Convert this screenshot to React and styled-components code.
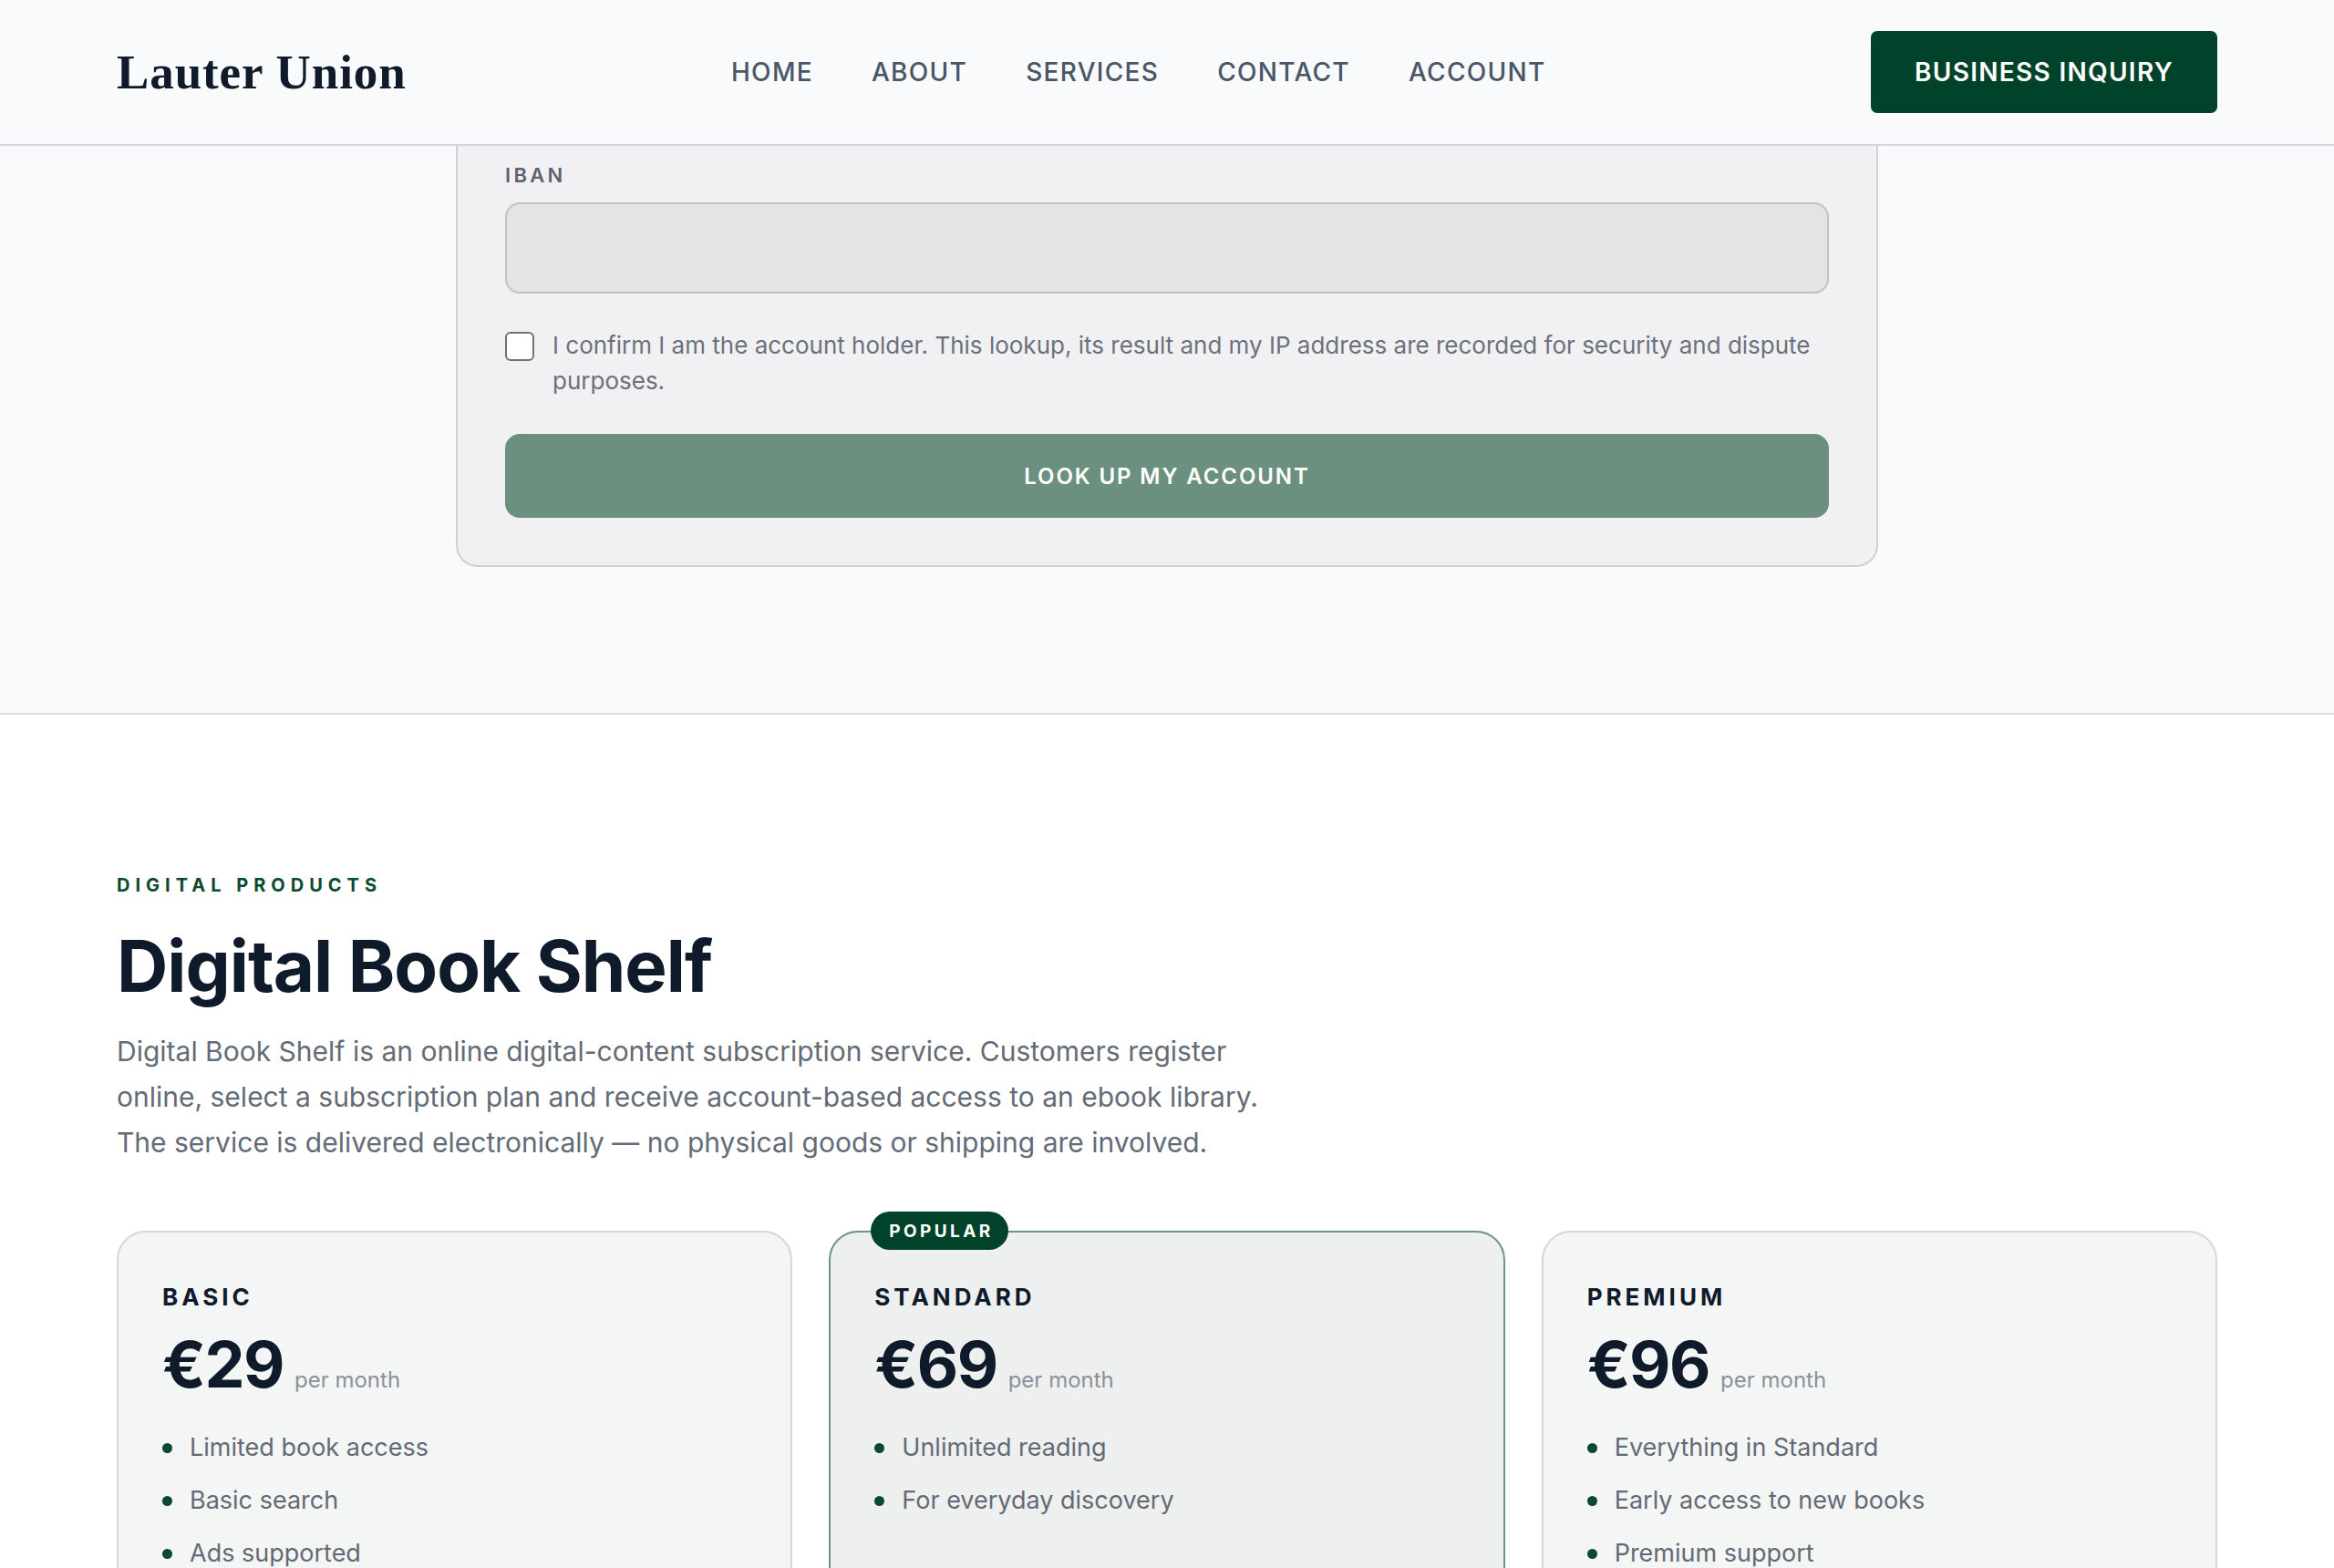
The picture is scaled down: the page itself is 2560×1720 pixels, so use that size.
import React from 'react'
import styled, { createGlobalStyle } from 'styled-components'

const GlobalStyle = createGlobalStyle`
  * { box-sizing: border-box; }
  body {
    margin: 0;
    background: #ffffff;
    font-family: Inter, "Noto Sans", sans-serif;
    color: #0f1a2a;
  }
`

const Header = styled.header`
  height: 160px;
  background: #f8fafc;
  border-bottom: 2px solid #d3d6dc;
`

const HeaderInner = styled.div`
  max-width: 2304px;
  height: 100%;
  margin: 0 auto;
  display: flex;
  align-items: center;
  justify-content: space-between;
`

const Logo = styled.a`
  font-family: "Liberation Serif", "Times New Roman", serif;
  font-weight: 700;
  font-size: 53px;
  letter-spacing: 0.9px;
  color: #0f1a2a;
  text-decoration: none;
`

const Nav = styled.nav`
  display: flex;
  gap: 64px;
`

const NavLink = styled.a`
  font-size: 28px;
  font-weight: 500;
  letter-spacing: 1.3px;
  color: #4a5567;
  text-decoration: none;
`

const InquiryButton = styled.button`
  height: 90px;
  padding: 0 48px;
  background: #01422a;
  color: #ffffff;
  border: none;
  border-radius: 7px;
  font-family: inherit;
  font-size: 28px;
  font-weight: 600;
  letter-spacing: 1.3px;
`

const LookupSection = styled.section`
  background: #f9fafb;
  padding-bottom: 160px;
  border-bottom: 2px solid #d9dbe0;
`

const FormCard = styled.div`
  width: 1560px;
  margin: 0 auto;
  padding: 16px 52px 52px;
  background: #f1f1f3;
  border: 2px solid #cfd0d5;
  border-top: none;
  border-radius: 0 0 24px 24px;
`

const Label = styled.label`
  display: block;
  margin-bottom: 14px;
  font-size: 22px;
  line-height: 32px;
  font-weight: 600;
  letter-spacing: 3.3px;
  color: #5d6470;
`

const TextInput = styled.input`
  display: block;
  width: 100%;
  height: 100px;
  padding: 0 28px;
  background: #e4e4e6;
  border: 2px solid #c0c1c6;
  border-radius: 16px;
  font-family: inherit;
  font-size: 28px;
  outline: none;
`

const ConfirmRow = styled.div`
  display: flex;
  align-items: flex-start;
  gap: 20px;
  margin-top: 37px;
`

const Checkbox = styled.input`
  appearance: none;
  flex-shrink: 0;
  width: 32px;
  height: 32px;
  margin: 5px 0 0;
  background: #ffffff;
  border: 2px solid #6e7178;
  border-radius: 6px;
`

const ConfirmText = styled.span`
  font-size: 26px;
  line-height: 39px;
  color: #6b717c;
`

const LookupButton = styled.button`
  display: block;
  width: 100%;
  height: 92px;
  margin-top: 39px;
  background: #6b9080;
  color: #ffffff;
  border: none;
  border-radius: 16px;
  font-family: inherit;
  font-size: 24px;
  font-weight: 600;
  letter-spacing: 1.9px;
`

const ProductsSection = styled.section`
  max-width: 2304px;
  margin: 0 auto;
  padding: 172px 0 120px;
`

const Eyebrow = styled.p`
  margin: 0;
  font-size: 20px;
  line-height: 30px;
  font-weight: 700;
  letter-spacing: 6px;
  color: #0b4a2e;
`

const Title = styled.h2`
  margin: 32px 0 0;
  font-size: 78px;
  line-height: 84px;
  font-weight: 700;
  letter-spacing: -1px;
  color: #0f1a2a;
`

const Lead = styled.p`
  max-width: 1280px;
  margin: 26px 0 0;
  font-size: 30px;
  line-height: 50px;
  color: #646b77;
`

const PlanGrid = styled.div`
  display: grid;
  grid-template-columns: repeat(3, 1fr);
  gap: 40px;
  margin-top: 72px;
`

const PlanCard = styled.div`
  position: relative;
  padding: 51px 48px 80px;
  background: ${p => (p.$featured ? '#eef0ef' : '#f4f5f5')};
  border: 2px solid ${p => (p.$featured ? '#6f9684' : '#d5d7db')};
  border-radius: 32px;
`

const Badge = styled.span`
  position: absolute;
  top: -23px;
  left: 44px;
  height: 42px;
  padding: 0 16px 0 20px;
  display: flex;
  align-items: center;
  background: #01422a;
  color: #ffffff;
  border-radius: 21px;
  font-size: 19px;
  font-weight: 700;
  letter-spacing: 3.4px;
`

const PlanName = styled.h3`
  margin: 0;
  font-size: 26px;
  line-height: 39px;
  font-weight: 700;
  letter-spacing: 4px;
  color: #0f1a2a;
`

const PriceRow = styled.div`
  display: flex;
  align-items: baseline;
  gap: 12px;
  margin-top: 20px;
`

const Price = styled.span`
  font-size: 70px;
  line-height: 1;
  font-weight: 700;
  letter-spacing: -1.5px;
  color: #0f1a2a;
`

const Period = styled.span`
  font-size: 24px;
  color: #8b919b;
`

const FeatureList = styled.ul`
  display: flex;
  flex-direction: column;
  gap: 18px;
  margin: 36px 0 0;
  padding: 0;
  list-style: none;
`

const Feature = styled.li`
  display: flex;
  align-items: center;
  gap: 19px;
  font-size: 27px;
  line-height: 40px;
  color: #646a75;

  &::before {
    content: '';
    width: 11px;
    height: 11px;
    border-radius: 50%;
    background: #0b4a2e;
    flex-shrink: 0;
  }
`

const plans = [
  { name: 'BASIC', price: '€29', features: ['Limited book access', 'Basic search', 'Ads supported'] },
  { name: 'STANDARD', price: '€69', popular: true, features: ['Unlimited reading', 'For everyday discovery'] },
  { name: 'PREMIUM', price: '€96', features: ['Everything in Standard', 'Early access to new books', 'Premium support'] },
]

const App = () => {
  return (
    <>
      <GlobalStyle />
      <Header>
        <HeaderInner>
          <Logo href="#">Lauter Union</Logo>
          <Nav>
            <NavLink href="#">HOME</NavLink>
            <NavLink href="#">ABOUT</NavLink>
            <NavLink href="#">SERVICES</NavLink>
            <NavLink href="#">CONTACT</NavLink>
            <NavLink href="#">ACCOUNT</NavLink>
          </Nav>
          <InquiryButton>BUSINESS INQUIRY</InquiryButton>
        </HeaderInner>
      </Header>

      <LookupSection>
        <FormCard>
          <Label htmlFor="iban">IBAN</Label>
          <TextInput id="iban" type="text" />
          <ConfirmRow>
            <Checkbox type="checkbox" id="confirm" />
            <ConfirmText>
              I confirm I am the account holder. This lookup, its result and my IP address are recorded for security and dispute purposes.
            </ConfirmText>
          </ConfirmRow>
          <LookupButton>LOOK UP MY ACCOUNT</LookupButton>
        </FormCard>
      </LookupSection>

      <ProductsSection>
        <Eyebrow>DIGITAL PRODUCTS</Eyebrow>
        <Title>Digital Book Shelf</Title>
        <Lead>
          Digital Book Shelf is an online digital-content subscription service. Customers register online, select a subscription plan and receive account-based access to an ebook library. The service is delivered electronically — no physical goods or shipping are involved.
        </Lead>
        <PlanGrid>
          {plans.map(plan => (
            <PlanCard key={plan.name} $featured={plan.popular}>
              {plan.popular && <Badge>POPULAR</Badge>}
              <PlanName>{plan.name}</PlanName>
              <PriceRow>
                <Price>{plan.price}</Price>
                <Period>per month</Period>
              </PriceRow>
              <FeatureList>
                {plan.features.map(f => (
                  <Feature key={f}>{f}</Feature>
                ))}
              </FeatureList>
            </PlanCard>
          ))}
        </PlanGrid>
      </ProductsSection>
    </>
  )
}

export default App
